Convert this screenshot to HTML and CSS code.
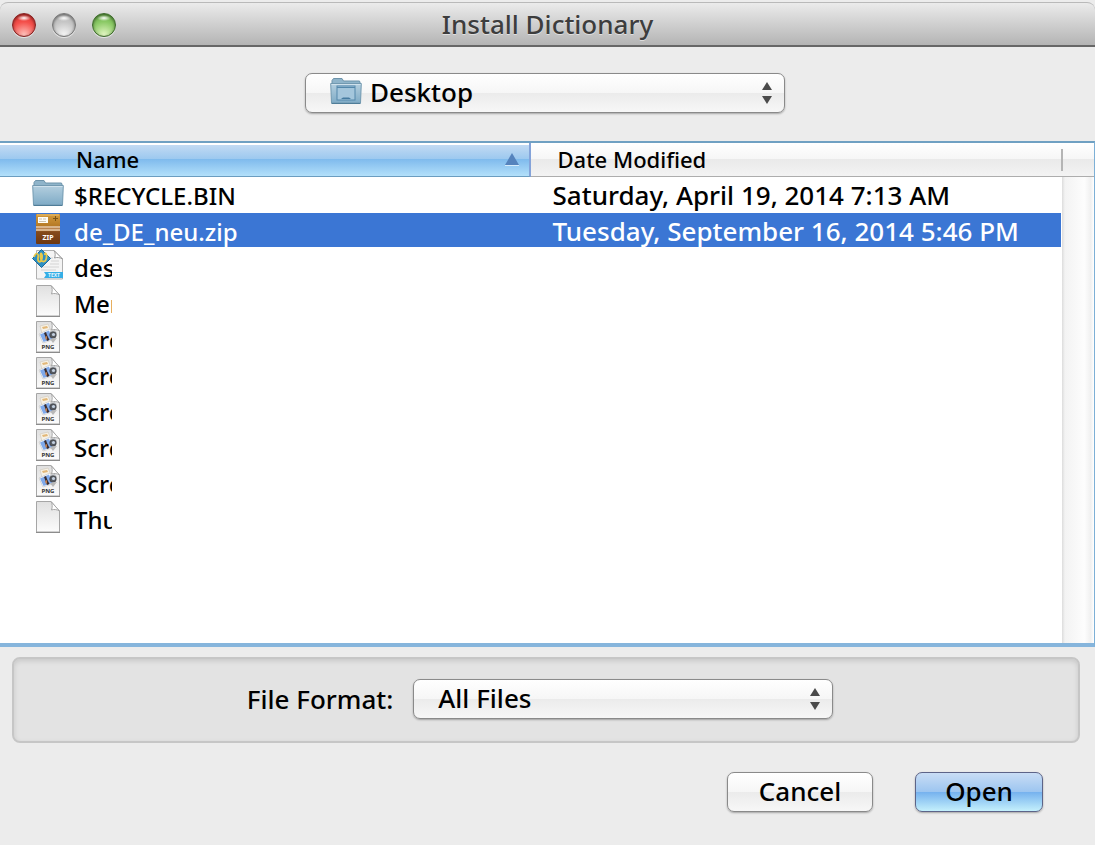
FILE: index.html
```html
<!DOCTYPE html>
<html lang="en">
<head>
    <meta charset="utf-8">
    <title>Install Dictionary</title>
    <meta name="viewport" content="width=device-width, initial-scale=1.0">
    <link rel="stylesheet" href="styles.css">
</head>
<body>
    <!-- Shared icons -->
    <svg class="defs" width="0" height="0" aria-hidden="true">
        <defs>
            <linearGradient id="folder-fill" x1="0" y1="0" x2="0" y2="1">
                <stop offset="0" stop-color="#b4cfdf"/>
                <stop offset="1" stop-color="#7fabc6"/>
            </linearGradient>
            <linearGradient id="page-fill" x1="0" y1="0" x2="0" y2="1">
                <stop offset="0" stop-color="#e0e0e0"/>
                <stop offset="1" stop-color="#fcfcfc"/>
            </linearGradient>
            <linearGradient id="zip-fill" x1="0" y1="0" x2="0" y2="1">
                <stop offset="0" stop-color="#d29a3c"/>
                <stop offset="1" stop-color="#b67a26"/>
            </linearGradient>
            <linearGradient id="zip-base" x1="0" y1="0" x2="0" y2="1">
                <stop offset="0" stop-color="#a8672a"/>
                <stop offset="1" stop-color="#6d3711"/>
            </linearGradient>
        </defs>
        <symbol id="icon-folder" viewBox="0 0 32 32">
            <path d="M2 9V5.500L3.500 3.500H12L13.500 6H29.500L30.500 9Z" fill="#8fb4ca" stroke="#6d93aa"/>
            <path d="M0.700 8.500H31.300L30.500 28H1.500Z" fill="url(#folder-fill)" stroke="#7299b0"/>
            <path d="M1.500 9.500H30.500" stroke="#cfe1ec"/>
            <path d="M1.500 28.500H30.500" stroke="#4f7d98"/>
        </symbol>
        <symbol id="icon-page" viewBox="0 0 32 32">
            <path d="M4.500 0.500H19L27.500 10V31H4.500Z" fill="url(#page-fill)" stroke="#a6a6a6"/>
            <path d="M19 0.500C20.500 3 20.500 6 19.500 9C22 8 25 8.500 27.500 10Z" fill="#fff" stroke="#a6a6a6"/>
            <path d="M4 31.500H28" stroke="#8c8c8c"/>
        </symbol>
        <symbol id="icon-png" viewBox="0 0 32 32">
            <use href="#icon-page"/>
            <path d="M8 5L16 3L20 12L11 16Z" fill="#f6f1e6" stroke="#c9bfae" stroke-width="0.500"/>
            <path d="M10 6L15 5L16 7L11 8Z" fill="#e3b878"/>
            <path d="M7 13L18 8L23 18L11 22Z" fill="#fff" stroke="#b5b5b5" stroke-width="0.500"/>
            <path d="M8 13.500L17 9.500L20.500 18L11.500 21Z" fill="#7fa9ea"/>
            <path d="M12 12L14 11L15 14L17.500 19L15 20Z" fill="#3b2c2c"/>
            <path d="M13 16L15 15L15 18L14 19Z" fill="#c27d4d"/>
            <path d="M18 10L23 9L25 12L22 17L19 14Z" fill="#bcc0c6"/>
            <circle cx="21" cy="14" r="3.300" fill="#555a62" stroke="#333" stroke-width="0.500"/>
            <circle cx="21.500" cy="13.500" r="1.600" fill="#c3cfdf"/>
            <path d="M18 18L21 22L25 17Z" fill="#b8b8b8"/>
        </symbol>
        <symbol id="icon-zip" viewBox="0 0 32 32">
            <rect x="4" y="1" width="24" height="30" rx="1" fill="url(#zip-base)"/>
            <rect x="4" y="1" width="24" height="12" rx="1" fill="url(#zip-fill)"/>
            <path d="M5 2H27" stroke="#e9be70"/>
            <rect x="4" y="13" width="24" height="5" fill="#d9b58c"/>
            <path d="M4 15.500H28" stroke="#b98350"/>
            <path d="M4 18.500H28" stroke="#8a5120"/>
            <rect x="6" y="4" width="10" height="6" fill="#fffdf6"/>
            <path d="M7 6H10M11 6H14M7 8.500H14" stroke="#b9a88c" stroke-width="0.700"/>
            <path d="M23.500 3V8M21 5.500H26" stroke="#7a5315"/>
        </symbol>
        <symbol id="icon-text" viewBox="0 0 32 32">
            <path d="M4.500 1.500H22L30.500 10V30H4.500Z" fill="#f4f4f4" stroke="#b0b0b0"/>
            <path d="M22 1.500C23.500 4 23.500 6.500 22.500 9C25 8 28 8.500 30.500 10Z" fill="#fff" stroke="#9a9a9a"/>
            <path d="M18 9H21M19 12H27M18 15H27M9 18H27M9 21H24" stroke="#d4d4d4"/>
            <path d="M9.500 0.500L18.500 9.500L9.500 18.500L0.500 9.500Z" fill="#2d8fc4" stroke="#1b6c9c"/>
            <path d="M2 8C4 3 7 4 6 9C5.500 14 9 14 10 9C10.500 4 8 2 8.500 8C9 14 14 14 14.500 8C15 4 12.500 3 13 6" fill="none" stroke="#e8c84a" stroke-width="1.800"/>
            <path d="M12 23H31V29H12L14 26Z" fill="#35aee6"/>
        </symbol>
        <symbol id="icon-updown" viewBox="0 0 10 22">
            <path d="M5 0L10 8H0Z" fill="#4a4a4a"/>
            <path d="M0 14H10L5 22Z" fill="#4a4a4a"/>
        </symbol>
    </svg>

    <header class="titlebar">
        <div class="lights">
            <button class="light red" aria-label="Close"></button>
            <button class="light gray" aria-label="Minimize"></button>
            <button class="light green" aria-label="Zoom"></button>
        </div>
        <h1>Install Dictionary</h1>
    </header>

    <div class="location">
        <div class="dropdown with-icon">
            <select aria-label="Location">
                <option>Desktop</option>
            </select>
            <svg class="dropdown-icon" viewBox="0 0 32 32" aria-hidden="true">
                <use href="#icon-folder"/>
                <rect x="7" y="11" width="18" height="14" fill="#a4c6dc" stroke="#5488ab"/>
                <path d="M7 12.500H25" stroke="#5488ab"/>
                <path d="M11 24L13 22.500H19L21 24Z" fill="#457ba0"/>
            </svg>
            <svg class="arrows" aria-hidden="true"><use href="#icon-updown"/></svg>
        </div>
    </div>

    <main class="file-list">
        <table>
            <colgroup>
                <col class="col-name">
                <col class="col-date">
                <col class="col-scroll">
            </colgroup>
            <thead>
                <tr>
                    <th class="sorted" aria-sort="ascending">
                        <button>Name <svg class="sort-arrow" viewBox="0 0 14 14" aria-hidden="true"><path d="M0 13.500H14" stroke="#d6ecfb"/><path d="M7 1L14 13H0Z" fill="#5583bd"/></svg></button>
                    </th>
                    <th><button>Date Modified</button></th>
                    <td></td>
                </tr>
            </thead>
            <tbody>
                <tr>
                    <td><div class="file"><svg viewBox="0 0 32 32"><use href="#icon-folder"/></svg><span>$RECYCLE.BIN</span></div></td>
                    <td class="date">Saturday, April 19, 2014 7:13 AM</td>
                    <td></td>
                </tr>
                <tr class="selected">
                    <td><div class="file"><svg viewBox="0 0 32 32"><use href="#icon-zip"/><text x="16" y="27" class="tag-zip">ZIP</text></svg><span>de_DE_neu.zip</span></div></td>
                    <td class="date">Tuesday, September 16, 2014 5:46 PM</td>
                    <td></td>
                </tr>
                <tr>
                    <td><div class="file"><svg viewBox="0 0 32 32"><use href="#icon-text"/><text x="22" y="28" class="tag-text">TEXT</text></svg><span class="cut">des</span></div></td>
                    <td></td>
                    <td></td>
                </tr>
                <tr>
                    <td><div class="file"><svg viewBox="0 0 32 32"><use href="#icon-page"/></svg><span class="cut">Men</span></div></td>
                    <td></td>
                    <td></td>
                </tr>
                <tr>
                    <td><div class="file"><svg viewBox="0 0 32 32"><use href="#icon-png"/><text x="16" y="28" class="tag-png">PNG</text></svg><span class="cut">Scre</span></div></td>
                    <td></td>
                    <td></td>
                </tr>
                <tr>
                    <td><div class="file"><svg viewBox="0 0 32 32"><use href="#icon-png"/><text x="16" y="28" class="tag-png">PNG</text></svg><span class="cut">Scre</span></div></td>
                    <td></td>
                    <td></td>
                </tr>
                <tr>
                    <td><div class="file"><svg viewBox="0 0 32 32"><use href="#icon-png"/><text x="16" y="28" class="tag-png">PNG</text></svg><span class="cut">Scre</span></div></td>
                    <td></td>
                    <td></td>
                </tr>
                <tr>
                    <td><div class="file"><svg viewBox="0 0 32 32"><use href="#icon-png"/><text x="16" y="28" class="tag-png">PNG</text></svg><span class="cut">Scre</span></div></td>
                    <td></td>
                    <td></td>
                </tr>
                <tr>
                    <td><div class="file"><svg viewBox="0 0 32 32"><use href="#icon-png"/><text x="16" y="28" class="tag-png">PNG</text></svg><span class="cut">Scre</span></div></td>
                    <td></td>
                    <td></td>
                </tr>
                <tr>
                    <td><div class="file"><svg viewBox="0 0 32 32"><use href="#icon-page"/></svg><span class="cut">Thu</span></div></td>
                    <td></td>
                    <td></td>
                </tr>
            </tbody>
        </table>
    </main>

    <div class="format">
        <label for="file-format">File Format:</label>
        <div class="dropdown">
            <select id="file-format">
                <option>All Files</option>
            </select>
            <svg class="arrows" aria-hidden="true"><use href="#icon-updown"/></svg>
        </div>
    </div>

    <footer class="actions">
        <button class="push cancel">Cancel</button>
        <button class="push open">Open</button>
    </footer>
</body>
</html>
```
FILE: styles.css
```css
* {
    box-sizing: border-box;
}
body {
    margin: 0;
    min-height: 100vh;
    display: flex;
    flex-direction: column;
    background: #ececec;
    color: #000;
    font-family: "Noto Sans", "Open Sans", sans-serif;
    font-size: 26px;
    font-weight: 500;
}
button, select {
    font-family: inherit;
    font-weight: inherit;
    color: inherit;
}
.defs {
    position: absolute;
}
.tag-png, .tag-zip, .tag-text {
    font-size: 6px;
    font-weight: bold;
    text-anchor: middle;
    fill: #333;
}
.tag-zip {
    font-size: 7px;
    fill: #fff;
}
.tag-text {
    font-size: 5px;
    fill: #e6f6ff;
}

/* Title bar */
.titlebar {
    display: grid;
    grid-template-columns: 1fr auto 1fr;
    align-items: center;
    height: 45px;
    margin-top: 2px;
    border-top: 1px solid #b9b9b9;
    border-bottom: 2px solid #676767;
    border-radius: 8px 8px 0 0;
    background: linear-gradient(#ebebeb, #b4b4b4);
}
.titlebar h1 {
    margin: 0;
    font-size: 26px;
    font-weight: 500;
    line-height: 42px;
    color: #3d3d3d;
    text-shadow: 0 1px 0 rgba(255,255,255,0.5);
}
.lights {
    display: flex;
    gap: 16px;
    padding: 2px 0 0 12px;
}
.light {
    width: 24px;
    height: 24px;
    padding: 0;
    border: 1px solid #777;
    border-radius: 50%;
    box-shadow: 0 1px 0 rgba(255,255,255,0.6), inset 0 1px 3px rgba(0,0,0,0.5);
}
.light.red {
    border-color: #86201f;
    background: radial-gradient(ellipse 7px 3px at 50% 4px, #fff, rgba(255,255,255,0)), radial-gradient(circle at 50% 95%, #ffc3bd, #f4504b 55%, #d8302e);
}
.light.gray {
    background: radial-gradient(ellipse 7px 3px at 50% 4px, #fff, rgba(255,255,255,0)), radial-gradient(circle at 50% 95%, #f6f6f6, #c6c6c6 55%, #b4b4b4);
}
.light.green {
    border-color: #3c6a2a;
    background: radial-gradient(ellipse 7px 3px at 50% 4px, #fff, rgba(255,255,255,0)), radial-gradient(circle at 50% 95%, #e4f7c4, #8cca67 55%, #5fa540);
}

/* Drop-downs */
.location {
    display: flex;
    justify-content: center;
    padding: 26px 310px 28px 305px;
}
.dropdown {
    position: relative;
    width: 420px;
}
.location .dropdown {
    width: 480px;
}
.dropdown select {
    display: block;
    width: 100%;
    height: 40px;
    padding: 0 40px 4px 24px;
    appearance: none;
    border: 1px solid #8a8a8a;
    border-radius: 7px;
    background: linear-gradient(#fff, #f6f6f6 50%, #ebebeb 50%, #f7f7f7);
    box-shadow: 0 1px 2px rgba(0,0,0,0.3);
    font-size: 26px;
}
.dropdown.with-icon select {
    padding-left: 64px;
}
.dropdown-icon {
    position: absolute;
    left: 25px;
    top: 2px;
    width: 32px;
    height: 32px;
}
.arrows {
    position: absolute;
    right: 13px;
    top: 9px;
    width: 10px;
    height: 22px;
}

/* File list */
.file-list {
    flex: 1;
    border-top: 2px solid #6fa0c2;
    border-right: 1px solid #7db0d6;
    border-bottom: 4px solid #86b5dc;
    background: linear-gradient(to right, #dcdcdc, #f3f3f3 3px, #fdfdfd 70%, #f0f0f0 90%, #fff) right / 32px 100% no-repeat #fff;
}
table {
    width: 100%;
    table-layout: fixed;
    border-collapse: separate;
    border-spacing: 0;
}
.col-name {
    width: 50%;
}
.col-date {
    width: 50%;
}
.col-scroll {
    width: 33px;
}
th, td {
    padding: 0;
    text-align: left;
    font-weight: 500;
}
thead th, thead td {
    height: 34px;
    border-bottom: 1px solid #adadad;
    background: linear-gradient(#fff, #f6f6f6 50%, #eaeaea 50%, #f3f3f3);
}
thead td {
    background: linear-gradient(#b4b4b4, #b4b4b4) 0 6px / 2px 22px no-repeat, linear-gradient(#fff, #f6f6f6 50%, #eaeaea 50%, #f3f3f3);
}
thead .sorted {
    border-right: 2px solid #84a3d9;
    border-bottom-color: #6b9dc0;
    background: linear-gradient(#fff 2px, #c2daf3 2px, #9bc8ef 50%, #80bbed 50%, #b3e0fa);
}
thead button {
    display: flex;
    align-items: center;
    justify-content: space-between;
    width: 100%;
    height: 32px;
    padding: 0 10px 2px 27px;
    border: 0;
    background: none;
    font-size: 22px;
}
thead .sorted button {
    padding-left: 76px;
}
.sort-arrow {
    width: 14px;
    height: 14px;
}
tbody td {
    height: 36px;
    border-bottom: 2px solid transparent;
    background-clip: padding-box;
    font-size: 24px;
    line-height: 34px;
    white-space: nowrap;
}
.file {
    display: flex;
    gap: 10px;
    height: 34px;
    padding-left: 32px;
}
.file svg {
    flex: none;
    width: 32px;
    height: 32px;
}
.file span {
    line-height: 38px;
}
.cut {
    width: 38px;
    overflow: hidden;
}
tbody .date {
    padding: 2px 0 0 22px;
    font-size: 26px;
    line-height: 32px;
}
.selected td {
    color: #fff;
    background-color: #3b76d4;
}
.selected td:last-child {
    background: none;
}

/* File format panel */
.format {
    display: flex;
    align-items: center;
    justify-content: center;
    gap: 20px;
    height: 86px;
    margin: 10px 15px 0 12px;
    padding: 0 12px 2px 0;
    border: 2px solid #c6c6c6;
    border-radius: 8px;
    background: #e3e3e3;
    box-shadow: inset 0 2px 5px rgba(0,0,0,0.12);
}

/* Buttons */
.actions {
    display: flex;
    justify-content: flex-end;
    gap: 42px;
    padding: 29px 52px 33px;
}
.push {
    height: 40px;
    padding: 0 0 2px;
    border: 1px solid #8a8a8a;
    border-radius: 7px;
    background: linear-gradient(#fff, #f6f6f6 50%, #ebebeb 50%, #f7f7f7);
    box-shadow: 0 1px 2px rgba(0,0,0,0.3);
    font-size: 26px;
}
.cancel {
    width: 146px;
}
.open {
    width: 128px;
    border-color: #5d6488;
    background: linear-gradient(#c9ddf5, #9cc5f0 50%, #75b1ee 50%, #c4f0fc);
}
```
